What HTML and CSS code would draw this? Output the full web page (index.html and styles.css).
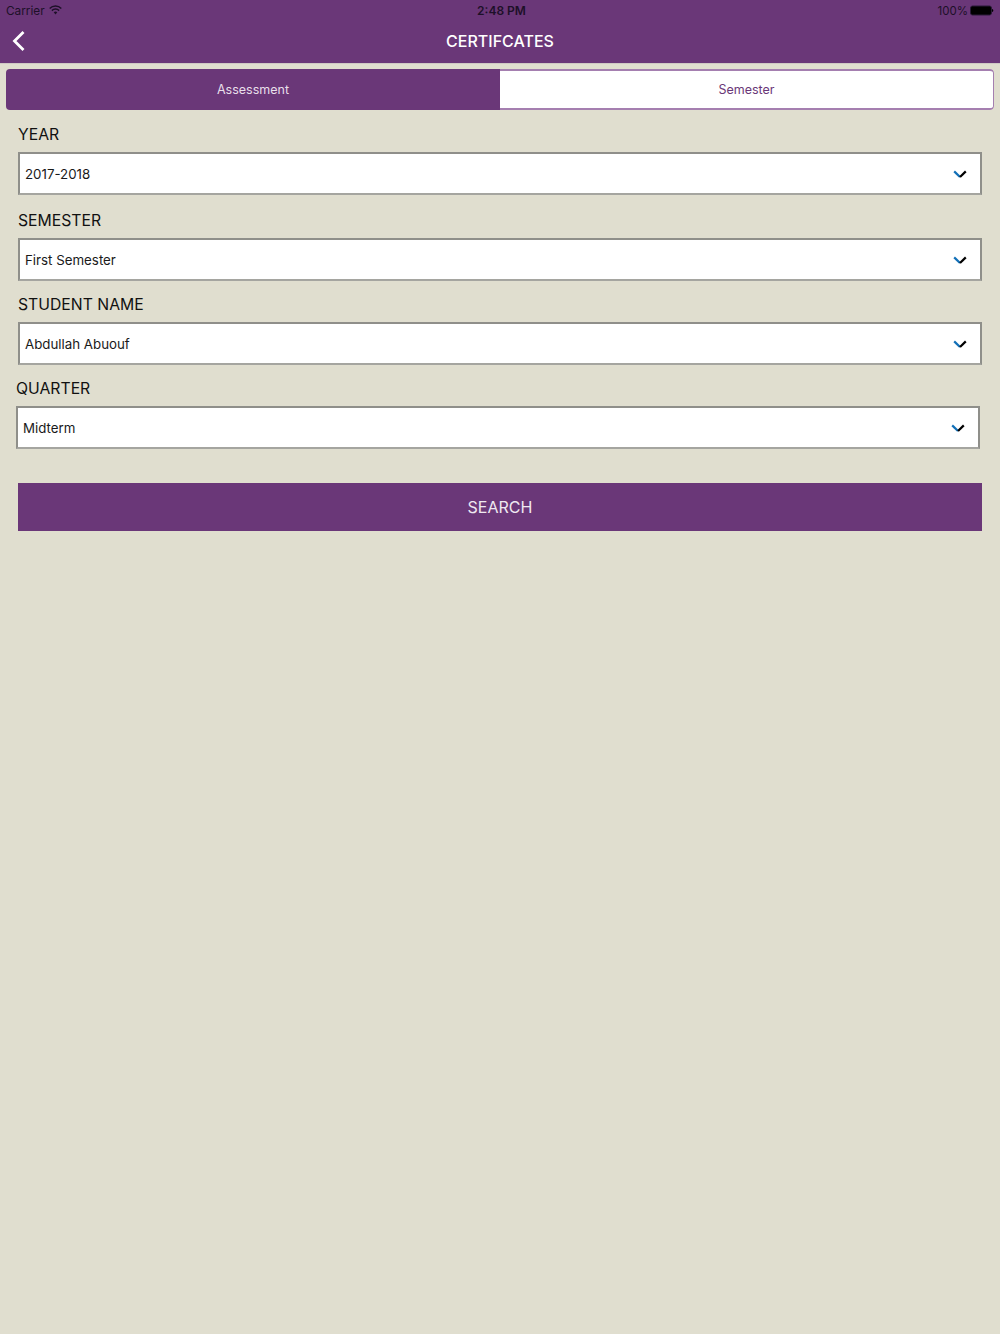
FILE: index.html
```html
<!DOCTYPE html>
<html lang="en">
<head>
    <meta charset="UTF-8">
    <meta name="viewport" content="width=device-width, initial-scale=1.0">
    <title>Certificates</title>
    <link rel="stylesheet" href="styles.css">
</head>
<body>
    <div class="top-bar">
        <div class="status-bar">
            <div class="status-left">
                <span>Carrier</span>
                <svg class="wifi-icon" width="13" height="10" viewBox="0 0 13 10">
                    <path d="M0.7 3.5 A8.2 8.2 0 0 1 12.3 3.5" fill="none" stroke="#1d1028" stroke-width="1.5"/>
                    <path d="M2.9 5.6 A5.1 5.1 0 0 1 10.1 5.6" fill="none" stroke="#1d1028" stroke-width="1.5"/>
                    <path d="M4.7 7.3 A2.7 2.7 0 0 1 8.3 7.3 L6.5 9.6 Z" fill="#1d1028"/>
                </svg>
            </div>
            <div class="status-time">2:48 PM</div>
            <div class="status-right">
                <span>100%</span>
                <svg class="battery-icon" width="25" height="11" viewBox="0 0 25 11">
                    <rect x="1.5" y="1" width="21" height="9" rx="2" fill="#000" stroke="#2a1a38"/>
                    <path d="M23 4 C24.8 4.2 24.8 6.8 23 7 Z" fill="#000"/>
                </svg>
            </div>
        </div>
        <div class="nav-bar">
            <svg class="back-icon" width="14" height="22" viewBox="0 0 14 22">
                <path d="M12.5 2 L3.5 11 L12.5 20" fill="none" stroke="#fff" stroke-width="2.8"/>
            </svg>
            <h1 class="nav-title">CERTIFCATES</h1>
        </div>
    </div>

    <div class="tabs">
        <div class="tab active">Assessment</div>
        <div class="tab">Semester</div>
    </div>

    <form class="search-form">
        <div class="field-group">
            <label class="field-label">YEAR</label>
            <div class="select-box">
                <span>2017-2018</span>
                <svg class="chevron" width="14" height="9" viewBox="0 0 14 9"><path class="chev-l" d="M1.2 1.4 L7 7"/><path class="chev-r" d="M7 7 L12.8 1.4"/></svg>
            </div>
        </div>
        <div class="field-group second">
            <label class="field-label">SEMESTER</label>
            <div class="select-box">
                <span>First Semester</span>
                <svg class="chevron" width="14" height="9" viewBox="0 0 14 9"><path class="chev-l" d="M1.2 1.4 L7 7"/><path class="chev-r" d="M7 7 L12.8 1.4"/></svg>
            </div>
        </div>
        <div class="field-group">
            <label class="field-label">STUDENT NAME</label>
            <div class="select-box">
                <span>Abdullah Abuouf</span>
                <svg class="chevron" width="14" height="9" viewBox="0 0 14 9"><path class="chev-l" d="M1.2 1.4 L7 7"/><path class="chev-r" d="M7 7 L12.8 1.4"/></svg>
            </div>
        </div>
        <div class="field-group shifted">
            <label class="field-label">QUARTER</label>
            <div class="select-box">
                <span>Midterm</span>
                <svg class="chevron" width="14" height="9" viewBox="0 0 14 9"><path class="chev-l" d="M1.2 1.4 L7 7"/><path class="chev-r" d="M7 7 L12.8 1.4"/></svg>
            </div>
        </div>
        <button type="button" class="search-btn">SEARCH</button>
    </form>
</body>
</html>
```

FILE: styles.css
```css
body {
    margin: 0;
    height: 1334px;
    background: #e0decf;
    font-family: Inter, "Liberation Sans", sans-serif;
    color: #111;
    overflow: hidden;
}

.top-bar {
    height: 63px;
    background: #6a3778;
    box-shadow: 0 1px 0 #cfc9c4;
}

.status-bar {
    height: 21px;
    padding: 0 6px;
    display: flex;
    align-items: center;
    justify-content: space-between;
    position: relative;
    font-size: 11.8px;
    color: #1d1028;
}

.status-left,
.status-right {
    display: flex;
    align-items: center;
    gap: 4px;
}

.status-left svg {
    margin-top: -1px;
}

.status-right {
    gap: 1px;
    font-size: 11.5px;
}

.status-time {
    position: absolute;
    left: 0;
    right: -3px;
    text-align: center;
    font-size: 12px;
    font-weight: 600;
}

.nav-bar {
    height: 40px;
    padding-bottom: 2px;
    position: relative;
    display: flex;
    align-items: center;
    justify-content: center;
}

.back-icon {
    position: absolute;
    left: 11px;
    top: 9px;
}

.nav-title {
    margin: 0;
    font-size: 16px;
    font-weight: 500;
    color: #fff;
}

.tabs {
    margin: 6px 6px 0;
    height: 41px;
    display: flex;
    border-radius: 4px;
    overflow: hidden;
}

.tab {
    flex: 1;
    box-sizing: border-box;
    display: flex;
    align-items: center;
    justify-content: center;
    font-size: 12.5px;
    color: #6a3778;
    background: #fff;
    border: 2px solid #a57fb0;
    border-left: 0;
    border-right-width: 1px;
    border-radius: 0 4px 4px 0;
}

.tab.active {
    flex: 0 0 494px;
    background: #6a3778;
    color: #e8dfea;
    border: 0;
    border-radius: 0;
}

.search-form {
    padding: 0 18px;
}

.field-group {
    margin-top: 13px;
}

.field-group:first-child {
    margin-top: 14px;
}

.field-group.second {
    margin-top: 15px;
}

.field-group.shifted {
    margin-left: -2px;
    margin-right: 2px;
}

.field-label {
    display: block;
    font-size: 15.75px;
    line-height: 21px;
    margin-bottom: 7px;
    color: #111;
}

.select-box {
    height: 43px;
    box-sizing: border-box;
    padding: 2px 13px 0 5px;
    background: #fff;
    border: 2px solid #8f8f8a;
    border-bottom-color: #a5a5a0;
    display: flex;
    align-items: center;
    justify-content: space-between;
    font-size: 13.3px;
    color: #1a1a1a;
}

.select-box span {
    margin-top: -2px;
}

.chevron {
    margin-top: -1px;
    fill: none;
    stroke-width: 2.2;
}

.chev-l {
    stroke: #1270b8;
}

.chev-r {
    stroke: #000;
}

.search-btn {
    display: block;
    width: 100%;
    height: 48px;
    margin-top: 34px;
    padding: 0;
    border: 0;
    background: #6a3778;
    color: #efe9f0;
    font-family: Inter, "Liberation Sans", sans-serif;
    font-size: 16px;
}
```
